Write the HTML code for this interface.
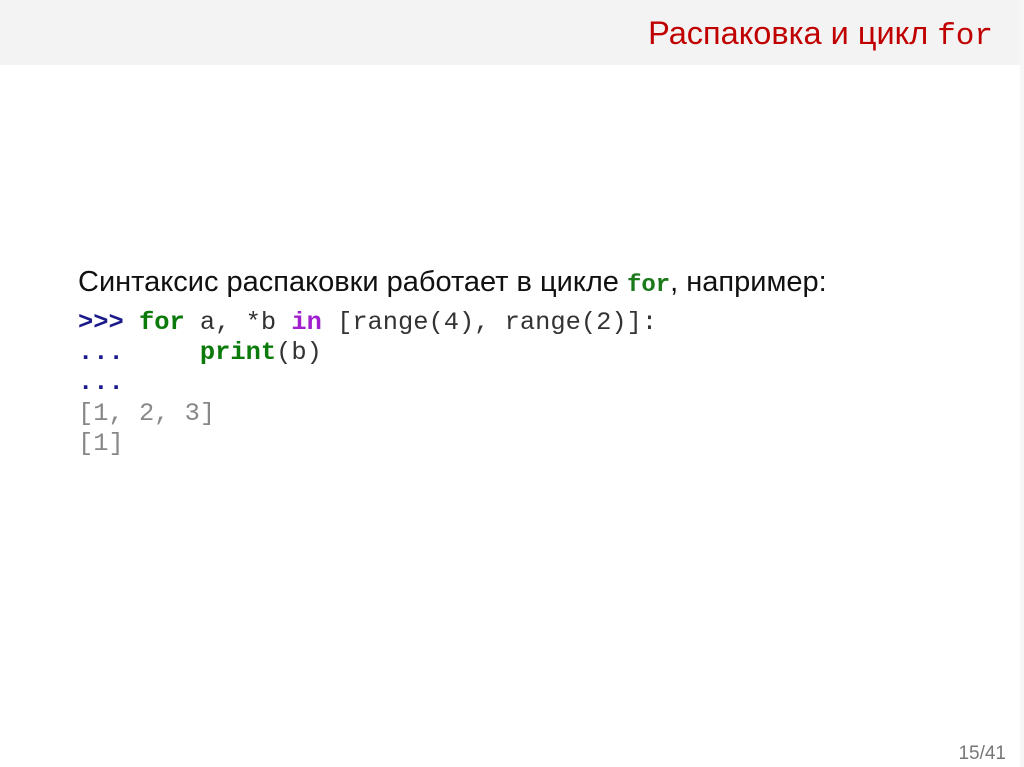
<!DOCTYPE html>
<html><head><meta charset="utf-8"><style>
body{margin:0;width:1024px;height:767px;background:#fff;position:relative;overflow:hidden;font-family:"Liberation Sans","DejaVu Sans",sans-serif}
.hd{position:absolute;left:0;top:0;width:1020px;height:65px;background:#f3f3f3}
.rb{position:absolute;right:0;top:0;width:4px;height:767px;background:#f6f6f6}
.t{position:absolute;right:31px;top:15px;font-size:32.5px;color:#c00000;white-space:nowrap}
.t code{font-family:"Liberation Mono",monospace;font-size:31px}
.p{position:absolute;left:78px;top:266px;font-size:29px;color:#111;white-space:nowrap}
.p b{font-family:"Liberation Mono",monospace;color:#1a7a1a;font-size:24px}
pre{position:absolute;left:78px;top:308px;margin:0;font-family:"Liberation Mono",monospace;font-size:25.4px;line-height:30.2px;color:#333}
.pr{color:#1a1a8a;font-weight:bold}.k{color:#0a7a0a;font-weight:bold}.m{color:#a020d0;font-weight:bold}.o{color:#888}
.n{position:absolute;right:18px;top:743px;font-size:19px;color:#777}
</style></head><body>
<div class="hd"></div><div class="rb"></div>
<div class="t">Распаковка и цикл <code>for</code></div>
<div class="p">Синтаксис распаковки работает в цикле <b>for</b>, например:</div>
<pre><span class="pr">&gt;&gt;&gt;</span> <span class="k">for</span> a, *b <span class="m">in</span> [range(4), range(2)]:
<span class="pr">...</span>     <span class="k">print</span>(b)
<span class="pr">...</span>
<span class="o">[1, 2, 3]
[1]</span></pre>
<div class="n">15/41</div>
</body></html>
